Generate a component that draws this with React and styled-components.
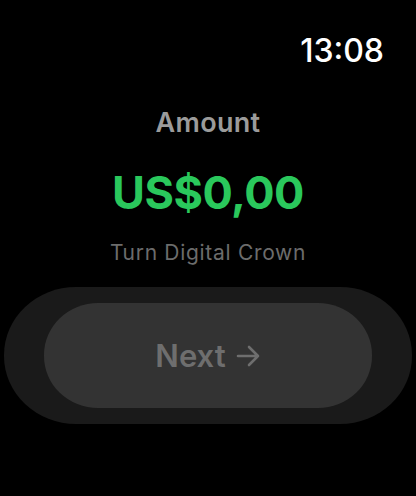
import React from 'react'
import styled, { createGlobalStyle } from 'styled-components'

const Global = createGlobalStyle`
  html, body {
    margin: 0;
    padding: 0;
    background: #000;
  }
  body {
    font-family: Inter, "Noto Sans", sans-serif;
  }
`

const Screen = styled.div`
  width: 416px;
  height: 496px;
  background: #000;
  display: flex;
  flex-direction: column;
  overflow: hidden;
`

const StatusBar = styled.div`
  display: flex;
  justify-content: flex-end;
  padding: 33px 32px 0 0;
  height: 40px;
`

const Time = styled.span`
  color: #fff;
  font-size: 32px;
  font-weight: 500;
  line-height: 36px;
`

const Content = styled.div`
  display: flex;
  flex-direction: column;
  align-items: center;
  padding-top: 35px;
`

const Label = styled.div`
  color: #9b9b9b;
  font-size: 27px;
  font-weight: 600;
  line-height: 30px;
  letter-spacing: 0.3px;
`

const Value = styled.div`
  color: #2ac85c;
  font-size: 45px;
  font-weight: 700;
  line-height: 54px;
  margin-top: 28px;
  letter-spacing: -0.5px;
`

const Hint = styled.div`
  color: #6c6c6c;
  font-size: 21px;
  font-weight: 400;
  line-height: 26px;
  margin-top: 20px;
  letter-spacing: 0.7px;
`

const Track = styled.div`
  margin: 21px 4px 0 4px;
  height: 137px;
  background: #1a1a1a;
  border-radius: 72px / 68px;
  display: flex;
  align-items: center;
  justify-content: center;
`

const Button = styled.button`
  width: 328px;
  height: 105px;
  border: none;
  border-radius: 54px / 52px;
  background: #333;
  color: #6e6e6e;
  font-family: inherit;
  font-size: 31px;
  font-weight: 600;
  display: flex;
  align-items: center;
  justify-content: center;
  gap: 10px;
  padding: 0;
`

export default function App() {
  return (
    <>
      <Global />
      <Screen>
        <StatusBar>
          <Time>13:08</Time>
        </StatusBar>
        <Content>
          <Label>Amount</Label>
          <Value>US$0,00</Value>
          <Hint>Turn Digital Crown</Hint>
        </Content>
        <Track>
          <Button>
            Next
            <svg width="25" height="22" viewBox="0 0 25 22" fill="none" stroke="#6e6e6e" strokeWidth="2.6" strokeLinecap="round" strokeLinejoin="round">
              <path d="M2 11h20M13 2l9 9-9 9" />
            </svg>
          </Button>
        </Track>
      </Screen>
    </>
  )
}
